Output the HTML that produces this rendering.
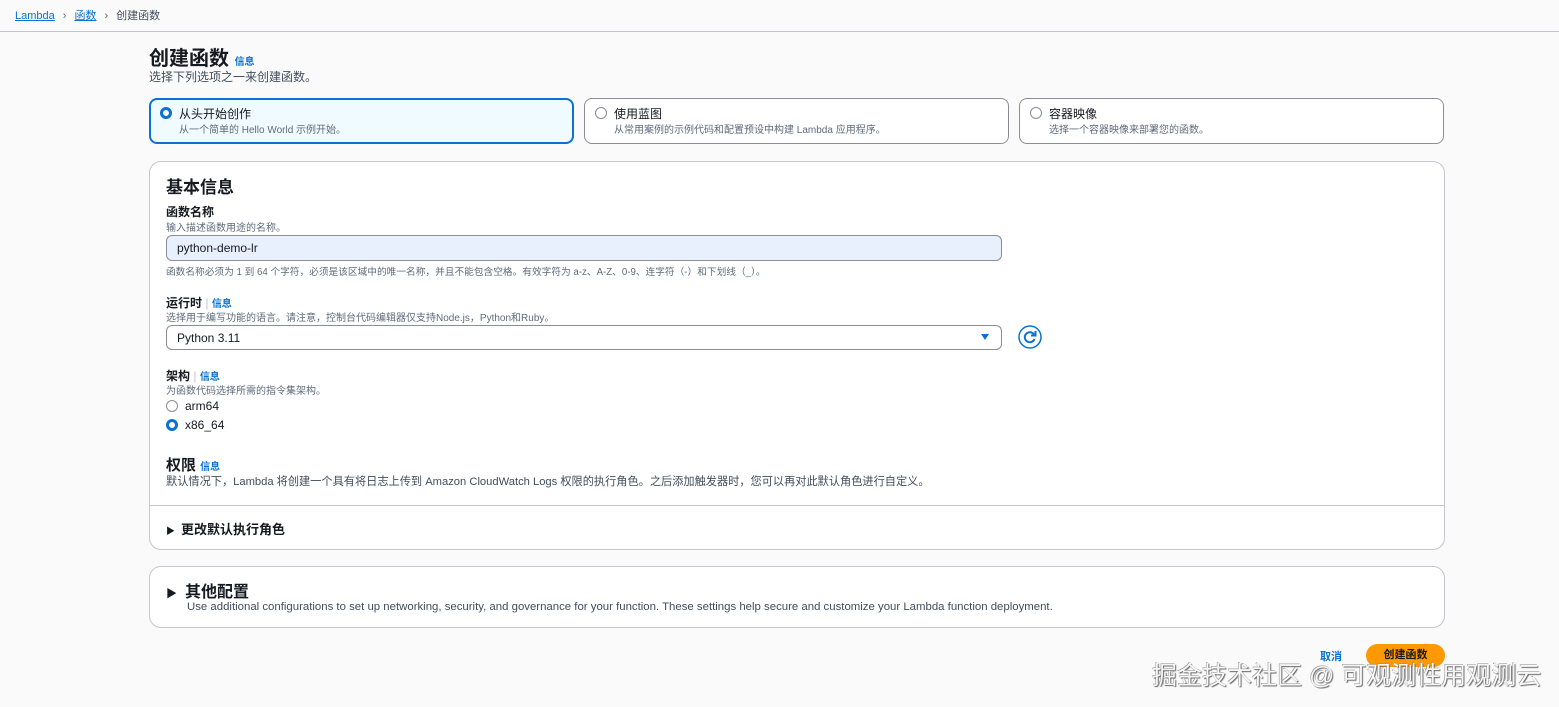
<!DOCTYPE html>
<html><head><meta charset="utf-8"><style>
*{margin:0;padding:0;box-sizing:border-box}
body{width:1559px;height:707px;background:#fafafa;font-family:"Liberation Sans","Noto Sans CJK SC",sans-serif;color:#16191f;position:relative;overflow:hidden}
.a{position:absolute;white-space:nowrap}
.blue{color:#0972d3}
.tile{position:absolute;top:98px;height:46px;width:425px;border:1px solid #8c8c94;border-radius:8px;background:#fff}
.rad{position:absolute;width:12px;height:12px;border-radius:50%;border:1px solid #8c8c94;background:#fff}
.rad.on{border:3.5px solid #0972d3}
.panel{position:absolute;left:149px;width:1296px;background:#fff;border:1px solid #c6c6cd;border-radius:12px}
</style></head><body>
<div class="a" style="left:15px;top:7px;font-size:11px"><span class="blue" style="text-decoration:underline">Lambda</span><span style="color:#5f6b7a;margin:0 8px">›</span><span class="blue" style="text-decoration:underline">函数</span><span style="color:#5f6b7a;margin:0 8px">›</span><span style="color:#414d5c">创建函数</span></div>
<div class="a" style="left:0;top:31px;width:1559px;height:1px;background:#c6c6cd"></div>
<div class="a" style="left:149px;top:42px;font-size:20px;font-weight:bold">创建函数 <span class="blue" style="font-size:10px">信息</span></div>
<div class="a" style="left:149px;top:68px;font-size:12px;color:#414d5c">选择下列选项之一来创建函数。</div>

<div class="tile" style="left:149px;border:2px solid #0972d3;background:#f0fbff"></div>
<div class="rad on" style="left:160px;top:107px"></div>
<div class="a" style="left:179px;top:105px;font-size:12px">从头开始创作</div>
<div class="a" style="left:179px;top:121px;font-size:10px;color:#5f6b7a">从一个简单的 Hello World 示例开始。</div>
<div class="tile" style="left:584px"></div>
<div class="rad" style="left:595px;top:107px"></div>
<div class="a" style="left:614px;top:105px;font-size:12px">使用蓝图</div>
<div class="a" style="left:614px;top:121px;font-size:10px;color:#5f6b7a">从常用案例的示例代码和配置预设中构建 Lambda 应用程序。</div>
<div class="tile" style="left:1019px"></div>
<div class="rad" style="left:1030px;top:107px"></div>
<div class="a" style="left:1049px;top:105px;font-size:12px">容器映像</div>
<div class="a" style="left:1049px;top:121px;font-size:10px;color:#5f6b7a">选择一个容器映像来部署您的函数。</div>

<div class="panel" style="top:161px;height:389px"></div>
<div class="a" style="left:166px;top:173px;font-size:17px;font-weight:bold">基本信息</div>
<div class="a" style="left:166px;top:203px;font-size:12px;font-weight:bold">函数名称</div>
<div class="a" style="left:166px;top:219px;font-size:10px;color:#5f6b7a">输入描述函数用途的名称。</div>
<div class="a" style="left:166px;top:235px;width:836px;height:26px;background:#e8f0fe;border:1px solid #8c8c94;border-radius:6px;font-size:12px;padding:5px 10px">python-demo-lr</div>
<div class="a" style="left:166px;top:264px;font-size:9.7px;color:#5f6b7a">函数名称必须为 1 到 64 个字符，必须是该区域中的唯一名称，并且不能包含空格。有效字符为 a-z、A-Z、0-9、连字符（-）和下划线（_）。</div>
<div class="a" style="left:166px;top:294px;font-size:12px;font-weight:bold">运行时 <span style="color:#c6c6cd;font-weight:normal">|</span> <span class="blue" style="font-size:10px">信息</span></div>
<div class="a" style="left:166px;top:309px;font-size:10px;color:#5f6b7a">选择用于编写功能的语言。请注意，控制台代码编辑器仅支持Node.js，Python和Ruby。</div>
<div class="a" style="left:166px;top:325px;width:836px;height:25px;background:#fff;border:1px solid #8c8c94;border-radius:6px;font-size:12px;padding:5px 10px">Python 3.11<span style="position:absolute;right:12px;top:8px;width:0;height:0;border-left:4px solid transparent;border-right:4px solid transparent;border-top:6px solid #0972d3"></span></div>
<svg class="a" style="left:1018px;top:325px" width="24" height="24" viewBox="0 0 24 24"><circle cx="12" cy="12" r="11" fill="#fff" stroke="#0972d3" stroke-width="1.5"/><path d="M16 9.5A5 5 0 1 0 16.5 14" fill="none" stroke="#0972d3" stroke-width="2"/><path d="M17.5 6v4.5H13" fill="none" stroke="#0972d3" stroke-width="2"/></svg>
<div class="a" style="left:166px;top:367px;font-size:12px;font-weight:bold">架构 <span style="color:#c6c6cd;font-weight:normal">|</span> <span class="blue" style="font-size:10px">信息</span></div>
<div class="a" style="left:166px;top:382px;font-size:10px;color:#5f6b7a">为函数代码选择所需的指令集架构。</div>
<div class="rad" style="left:166px;top:400px"></div>
<div class="a" style="left:185px;top:399px;font-size:12px">arm64</div>
<div class="rad on" style="left:166px;top:419px"></div>
<div class="a" style="left:185px;top:418px;font-size:12px">x86_64</div>
<div class="a" style="left:166px;top:454px;font-size:15px;font-weight:bold">权限 <span class="blue" style="font-size:10px">信息</span></div>
<div class="a" style="left:166px;top:473px;font-size:11.2px;color:#414d5c">默认情况下，Lambda 将创建一个具有将日志上传到 Amazon CloudWatch Logs 权限的执行角色。之后添加触发器时，您可以再对此默认角色进行自定义。</div>
<div class="a" style="left:150px;top:505px;width:1294px;height:1px;background:#c6c6cd"></div>
<div class="a" style="left:166px;top:519px;font-size:13px;font-weight:bold"><span style="font-size:9px;margin-right:6px">▶</span>更改默认执行角色</div>

<div class="panel" style="top:566px;height:62px"></div>
<div class="a" style="left:166px;top:578px;font-size:16px;font-weight:bold"><span style="font-size:11px;margin-right:8px">▶</span>其他配置</div>
<div class="a" style="left:187px;top:601px;font-size:11.4px;color:#414d5c">Use additional configurations to set up networking, security, and governance for your function. These settings help secure and customize your Lambda function deployment.</div>

<div class="a blue" style="left:1320px;top:648px;font-size:11px;font-weight:bold">取消</div>
<div class="a" style="left:1366px;top:644px;width:79px;height:23px;background:#ff9900;border-radius:12px;font-size:11px;font-weight:bold;text-align:center;line-height:23px">创建函数</div>
<div class="a" style="left:1152px;top:656px;font-size:25px;color:#f7f7f7;text-shadow:1px 1px 1px #666,-0.5px -0.5px 0 #888">掘金技术社区 @ 可观测性用观测云</div>
</body></html>
